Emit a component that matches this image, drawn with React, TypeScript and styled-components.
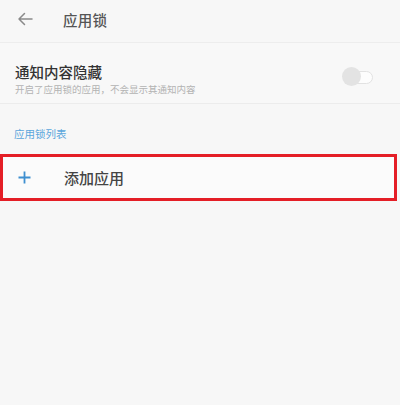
import React from "react";
import styled, { createGlobalStyle } from "styled-components";

const Global = createGlobalStyle`
  html, body { margin: 0; padding: 0; background: #f7f7f7; }
  body { font-family: "Noto Sans CJK SC", "Noto Sans", sans-serif; }
`;

const Page = styled.div`
  width: 400px;
  height: 405px;
  background: #f7f7f7;
  display: flex;
  flex-direction: column;
  overflow: hidden;
`;

const Header = styled.div`
  height: 43px;
  display: flex;
  align-items: center;
  padding: 0 0 4px 17px;
  border-bottom: 1px solid #ededed;
  box-sizing: border-box;
`;

const Back = styled.svg`
  width: 16px;
  height: 14px;
  flex: none;
`;

const Title = styled.div`
  margin-left: 30px;
  font-size: 14.5px;
  font-weight: 500;
  color: #555;
  letter-spacing: 0.3px;
`;

const SettingRow = styled.div`
  display: flex;
  align-items: center;
  padding: 12px 27px 0 15px;
  height: 61px;
  box-sizing: border-box;
  border-bottom: 1px solid #ececec;
  background: #f8f8f8;
`;

const TextCol = styled.div`
  flex: 1;
  display: flex;
  flex-direction: column;
`;

const MainText = styled.div`
  font-size: 14.5px;
  font-weight: 500;
  color: #333;
  line-height: 18px;
`;

const SubText = styled.div`
  font-size: 9.5px;
  color: #b3b3b3;
  line-height: 14px;
  margin-top: 1px;
`;

const Toggle = styled.div`
  position: relative;
  width: 27px;
  height: 11px;
  border: 1px solid #e2e2e2;
  border-radius: 7px;
  background: #fdfdfd;
  margin-top: -4px;
`;

const Knob = styled.div`
  position: absolute;
  left: -3px;
  top: -5px;
  width: 19px;
  height: 19px;
  border-radius: 50%;
  background: #e3e3e3;
`;

const SectionLabel = styled.div`
  font-size: 10.5px;
  color: #5aa6dc;
  padding: 22px 0 0 14px;
  height: 50px;
  box-sizing: border-box;
`;

const AddRow = styled.div`
  height: 47px;
  width: 397px;
  box-sizing: border-box;
  border: 3px solid #e41e26;
  background: #fbfbfb;
  display: flex;
  align-items: center;
  padding-left: 15px;
`;

const Plus = styled.svg`
  width: 13px;
  height: 13px;
  flex: none;
`;

const AddText = styled.div`
  margin-left: 33px;
  font-size: 15px;
  font-weight: 500;
  color: #444;
`;

export default function App() {
  return (
    <Page>
      <Global />
      <Header>
        <Back viewBox="0 0 16 14">
          <path d="M15 7H2M7.5 1.5L2 7l5.5 5.5" fill="none" stroke="#8a8a8a" strokeWidth="1.5" strokeLinecap="round" strokeLinejoin="round" />
        </Back>
        <Title>应用锁</Title>
      </Header>
      <SettingRow>
        <TextCol>
          <MainText>通知内容隐藏</MainText>
          <SubText>开启了应用锁的应用，不会显示其通知内容</SubText>
        </TextCol>
        <Toggle>
          <Knob />
        </Toggle>
      </SettingRow>
      <SectionLabel>应用锁列表</SectionLabel>
      <AddRow>
        <Plus viewBox="0 0 13 13">
          <path d="M6.5 0.5v12M0.5 6.5h12" stroke="#3e8fd0" strokeWidth="1.8" />
        </Plus>
        <AddText>添加应用</AddText>
      </AddRow>
    </Page>
  );
}
